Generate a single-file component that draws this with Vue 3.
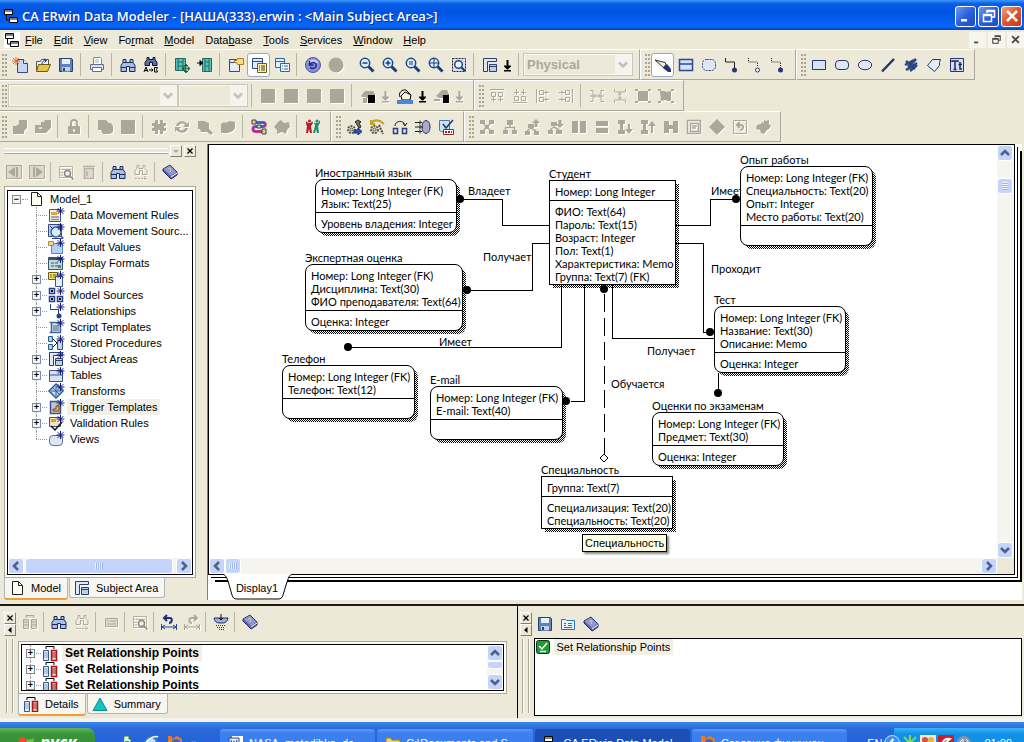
<script setup>
import { h, ref } from "vue";

// little asterisk that marks the tree icons
const star = '<path d="M12.5 0v8M8.5 4h8M9.7 1.2l5.6 5.6M15.3 1.2l-5.6 5.6" stroke="#141c7c" fill="none"/>';
const lens = '<path d="M9.5 9.5l5 5" stroke="#1d3d78" stroke-width="3"/><circle cx="6" cy="6" r="4.7" fill="#dcecfb" stroke="#1d4a86" stroke-width="1.5"/>';
const glasses = '<path d="M3 2.500h3v3h4v-3h3v3l2 3v6H9.500v-5h-3v5H1v-6l2-3z" fill="#a9bde8" stroke="#1b2a5e"/><path d="M1 10.500h5.500M9.500 10.500H15M3 5.500h3M10 5.500h3" stroke="#1b2a5e"/>';
const greyGlasses = '<path d="M4 1.5h2v3h4v-3h2v3l2 2v4H9.500v-4h-3v4H2v-4l2-2z" fill="none" stroke="#aca899"/><path d="M2 14.5h12M11 12l3 2.500-3 2" fill="none" stroke="#aca899" stroke-dasharray="2 1"/>';
const book = '<path d="M1 5l7-4 7 7v3l-6 4-8-8z" fill="#5a63a8" stroke="#23285c"/><path d="M1.5 5L8 1.5 14.5 8 9 12z" fill="#8f97d6"/><path d="M9 13l6-4" stroke="#fff"/><path d="M6 5.500c1-2 4-1 2.500 1L8 8" stroke="#e8e27a" fill="none"/>';
const floppy = '<path d="M1.5 1.5h12l1 1v12h-13z" fill="#5f82b8" stroke="#27426f"/><path d="M4 2h8v5H4z" fill="#e6eefa"/><path d="M4 10h8v4.500H4z" fill="#c3cfe2"/><path d="M5 11h2v3H5z" fill="#27426f"/>';
const cylinders = '<path d="M4 4V1.5h8V4" fill="none" stroke="#000"/><path d="M1.5 5.500h5v10h-5z" fill="#e3eefc" stroke="#31598c"/><path d="M2 8h4M2 10h4M2 12h4" stroke="#7fa0cc"/><path d="M9.500 5.500h5v10h-5z" fill="#f3d3d3" stroke="#a61616" stroke-width="1.5"/><path d="M10 8h4M10 10h4M10 12h4" stroke="#a61616"/>';
const areas = '<path d="M1.5 14.5v-13h13v3h-9v10z" fill="#dde8f8" stroke="#2b3f68"/><path d="M7.5 7.5h7v7h-7zM7.5 9.5h7" fill="#bcd0ee" stroke="#2b3f68"/>';
const toolBase = '<circle cx="5.5" cy="10.5" r="3.5" fill="none" stroke="#55584a" stroke-width="2" stroke-dasharray="2 1"/><circle cx="5.5" cy="10.5" r="1.5" fill="#e4dfb8" stroke="#55584a"/>';

const icons = {
  app: '<path d="M1.5 1.5h8v5h-8zM6.5 9.5h8v5h-8z" fill="#fff" stroke="#000"/><path d="M1 3h9M6 11h9" stroke="#000"/><path d="M3.5 7v5H7" stroke="#000" fill="none"/>',
  new: '<path d="M5.5 2.5h6l4 4v9h-10z" fill="#c8d7f0" stroke="#33487f"/><path d="M11.5 2.5v4h4" fill="#fff" stroke="#33487f"/><path d="M4 0v8M0 4h8M1 1l6 6M7 1L1 7" stroke="#e0762a"/>',
  open: '<path d="M1.5 13.5v-9h4l1-2h7v6" fill="#eef2fa" stroke="#555"/><path d="M1.5 14.5l2-7h12l-3 7z" fill="#e4c64a" stroke="#6b5a12"/><path d="M7 7c0-3 2-3.500 4-3.500M9.500 1.5l2 2-2 2" fill="none" stroke="#1c3c7a"/>',
  save: floppy,
  print: '<path d="M4.5 7V.5h7l1 1V7" fill="#fff" stroke="#7c8aa5"/><path d="M1.5 7.5h13v5h-13z" fill="#d9e2f1" stroke="#5f6f8d"/><path d="M3.5 10.5h9v4h-9z" fill="#fff" stroke="#5f6f8d"/><path d="M6 3h4M6 5h4" stroke="#9fb0cf"/>',
  find: glasses,
  replace: '<path d="M4 .5h2v2h4v-2h2v2l2 3v3H9.500v-3h-3v3H2v-3l2-3z" fill="#5b6fae" stroke="#111"/><path d="M1 15l2-5 2 5M2 13.5h2M11.5 10.5h3l-1 2 1 2.500h-3z" fill="none" stroke="#000"/><path d="M6 13h4M8.500 11.5l1.5 1.5-1.5 1.5" fill="none" stroke="#000"/>',
  filmOut: '<path d="M1.5 1.5h10v12h-10z" fill="#59c2b4" stroke="#23695f"/><path d="M4 1v13M9 1v13M4 5h5M4 9h5" stroke="#23695f"/><path d="M12 8v7M8.500 11.5h7M12 7l-2 2h4zM12 16l-2-2h4zM8 11.5l2-2v4zM16 11.5l-2-2v4z" stroke="#145c38" fill="#145c38" stroke-width=".6"/>',
  filmIn: '<path d="M5.500 1.5h9v13h-9z" fill="#59c2b4" stroke="#23695f"/><path d="M8 1v13M12 1v13M8 5h4M8 9h4" stroke="#23695f"/><path d="M0 6h5M3 3.5L5.500 6 3 8.500z" stroke="#000"/>',
  display: '<path d="M1.5 2.5h10v12h-10z" fill="#e2ecfb" stroke="#2e4a80"/><path d="M1.5 5.500h6" stroke="#2e4a80"/><path d="M6.5 3.5h2l1-2h6v6h-6l-1-2h-2z" fill="#fbd987" stroke="#b07a1c"/>',
  tables: '<path d="M1.5 1.5h10v10h-10z" fill="#e2ecfb" stroke="#2e4a80"/><path d="M1.5 4.5h10" stroke="#2e4a80"/><path d="M6.5 6.5h9v9h-9z" fill="#fbf3b5" stroke="#665c1c"/><path d="M8 9h1M8 11h1M8 13h1M10 9h4M10 11h4M10 13h4" stroke="#3c3a20"/>',
  columns: '<path d="M1.5 1.5h9v9h-9z" fill="#e2ecfb" stroke="#2e6a9a"/><path d="M1.5 4.5h9" stroke="#2e6a9a"/><path d="M6.5 6.5h9v8h-9z" fill="#eef6ff" stroke="#2e6a9a"/><path d="M8 9h1M8 12h1M10 9h4M10 12h4" stroke="#2e6a9a"/>',
  undo: '<circle cx="8" cy="8" r="7.5" fill="#8790e0" stroke="#4f579a"/><path d="M2.5 6a6 6 0 0 1 11 0z" fill="#c9cdf6"/><path d="M5 10.5c5 3 8-2 5-4.500-1.5-1-3-.5-5 1M4.5 4v4h4" fill="none" stroke="#23247c" stroke-width="1.5"/>',
  disc: '<circle cx="8" cy="8" r="7.5" fill="#aca899"/>',
  zoomOut: lens + '<path d="M3.5 6h5" stroke="#1d3d78" stroke-width="1.5"/>',
  zoomIn: lens + '<path d="M3.5 6h5M6 3.5v5" stroke="#1d3d78" stroke-width="1.5"/>',
  zoomEq: lens + '<path d="M4 5h4M4 7h4" stroke="#1d3d78"/>',
  zoomFit: lens + '<path d="M1 6h10M6 1v10" stroke="#1d3d78"/>',
  zoomSel: '<path d="M1.5 1.5h13v13h-13z" fill="#d3dff2" stroke="#222" stroke-dasharray="2 1"/><path d="M10 10l4 4" stroke="#1d3d78" stroke-width="2"/><circle cx="7.5" cy="7.5" r="3.8" fill="#eef6ff" stroke="#1d4a86" stroke-width="1.5"/>',
  areas,
  pointer: '<path d="M0 3l10 2.500 2 4-3 1.5z" fill="#f5ecd2" stroke="#2b2b2b"/><path d="M9 9l3-2 4 5v3h-3l-5-4z" fill="#26356e"/>',
  entity: '<path d="M1.5 2.5h13v11h-13z" fill="#d7e2f6" stroke="#2a4a94" stroke-width="1.5"/><path d="M1 7h14" stroke="#2a4a94" stroke-width="1.5"/>',
  roundEnt: '<rect x="1.5" y="2.5" width="13" height="11" rx="4" fill="#dfe7f6" stroke="#2a3e78" stroke-dasharray="2 1"/>',
  rel: '<path d="M1.5 1v4h9v6" fill="none" stroke="#222"/><circle cx="10.5" cy="13" r="2.5" fill="#24387c"/>',
  relMany: '<path d="M1.5 1v4h9v5" fill="none" stroke="#222" stroke-dasharray="1 1"/><circle cx="10.5" cy="13" r="2" fill="#fff" stroke="#24387c"/>',
  relNon: '<path d="M1.5 1v4h9v6" fill="none" stroke="#222" stroke-dasharray="1 1"/><circle cx="10.5" cy="13" r="2.5" fill="#24387c"/>',
  rect: '<path d="M1.5 3.5h13v9h-13z" fill="#d7e2f6" stroke="#26356e"/>',
  rrect: '<rect x="1.5" y="3.5" width="13" height="9" rx="3.5" fill="#dfe7f6" stroke="#26356e"/>',
  ellipse: '<ellipse cx="8" cy="8" rx="6.7" ry="4.7" fill="#dfe7f6" stroke="#26356e"/>',
  line: '<path d="M2 14.5L14 2" stroke="#26356e" stroke-width="2.5"/>',
  scribble: '<path d="M2 8l9-5M3 13L14 6M7 14l7-6M3 4l9 8M5 10l8-8" stroke="#2d4382" stroke-width="2.5"/>',
  polygon: '<path d="M6.5 2.5h8l-1 3v3l-5 6-7-6z" fill="#e6edf9" stroke="#26356e"/>',
  text: '<path d="M1.5 1.5h13v13h-13z" fill="#d5e0f4" stroke="#26356e"/><path d="M3 5V4h6v1M6 4v8M4.5 12.5h3M11 5v7h2M9.500 7.5H13" stroke="#1c2857" fill="none" stroke-width="1.5"/>',
  square: '<path d="M1 1h14v14H1z" fill="#aca899"/>',
  paintGrey: '<path d="M1 8l4-5h8l2 3v4H6v-1H2zM3 10h4v5H3z" fill="#aca899"/><path d="M8 7h7v8H8z" fill="#000"/>',
  paint: '<path d="M4 8l4-4 6 3-1 5H5z" fill="#fdf6d6" stroke="#000"/><path d="M3 9c-2-4 2-8 6-7l5 5" fill="none" stroke="#000"/><path d="M0 12h16v4H0z" fill="#4d86d8"/>',
  lineGrey: '<path d="M2 8l6-6h5l2 4v4H5zM0 11h6v2H0z" fill="#aca899"/><path d="M9 7h6v8H9z" fill="#000"/>',
  alignT: '<path d="M1 1.5h14M2.5 4.5h4v4h-4zM9.500 4.5h4v4h-4zM4.5 9v5M11.5 9v5M2 11.5h5M9 11.5h5" fill="none" stroke="#aca899"/>',
  alignB: '<path d="M1 14.5h14M2.5 8.500h4v4h-4zM9.500 8.500h4v4h-4zM4.5 1v6M11.5 1v6M2 4.5h5M9 4.5h5" fill="none" stroke="#aca899"/>',
  alignL: '<path d="M1.5 1v14M4.5 2.5h4v4h-4zM4.5 9.500h4v4h-4zM9 4.5h5M9 11.5h5M11 2.5v4M11 9.500v4" fill="none" stroke="#aca899"/>',
  alignR: '<path d="M14.5 1v14M7.5 2.5h4v4h-4zM7.5 9.500h4v4h-4zM1 4.5h6M1 11.5h6M4 2.5v4M4 9.500v4" fill="none" stroke="#aca899"/>',
  spreadH: '<path d="M1 2.5h3v11H1M15 2.5h-3v11h3M4 8h8M6 6v4M10 6v4M1 8h3M12 8h3" fill="none" stroke="#aca899"/>',
  spreadV: '<path d="M2.5 1v3h11V1M2.5 15v-3h11v3M8 4v8M6 6h4M6 10h4" fill="none" stroke="#aca899"/>',
  group: '<path d="M3 3h10v10H3zM0 1h3v2H0zM13 1h3v2h-3zM0 13h3v2H0zM13 13h3v2h-3z" fill="#aca899"/>',
  ungroup: '<path d="M2 3h5l1 1 5-1v10H9l-1-1-5 1zM0 1h3v2H0zM13 1h3v2h-3zM0 13h3v2H0zM13 13h3v2h-3z" fill="#aca899"/>',
  copyA: '<path d="M7 1h8v8l-3 3v3H1V7h3l3-2z" fill="#aca899"/>',
  copyB: '<path d="M6 3h3l1-2h6v8l-5 5H0V6h6z" fill="#aca899"/><path d="M4 8h3v2H4z" fill="#e6e3d4"/>',
  lock: '<path d="M2 7h12v8H2z" fill="#aca899"/><path d="M5 7V4a3 3 0 0 1 6 0v3" fill="none" stroke="#aca899" stroke-width="2"/><path d="M7 10h2v3H7z" fill="#ece9d8"/>',
  pages: '<path d="M1 1h8l3 3h2l2 3v6l-3 2H6l-2-4H1z" fill="#aca899"/>',
  cmp: '<path d="M1 4h3V1h3v4h2V1h3v3h3v3h-2v2h2v3h-3v3H9v-4H7v4H4v-3H1V9h2V7H1z" fill="#aca899"/>',
  cycle: '<path d="M2 7c1-6 9-6 11-2l2-2v5h-6l2-2C9 4 6 4 5 7zM14 9c-1 6-9 6-11 2l-2 2V8h6l-2 2c2 2 5 2 6-1z" fill="#aca899"/>',
  docFind: '<path d="M1 2h6l5 2v6l4 4-2 2-4-3H4l-1-3H1z" fill="#aca899"/>',
  docs: '<path d="M1 5l3-2 1 1 5-2 5 1v6l-2 3-5 2H1z" fill="#aca899"/>',
  snake: '<path d="M2 3.5h10c3 0 3 4 0 4H5c-4 0-4 5 0 5h9" fill="none" stroke="#c23a86" stroke-width="3"/><path d="M2 3.5h10c3 0 3 4 0 4H5c-4 0-4 5 0 5h9" fill="none" stroke="#2f62c4"/><path d="M1 1h4v4H1zM11 10h4v5h-4zM6 6h4v3H6z" fill="#f1d44b" stroke="#2f3f8c"/>',
  blob: '<path d="M4 3l3-2 3 3 5-1 1 5-3 3-1 4-4-2-5 2v-4l-3-3z" fill="#aca899"/>',
  people: '<path d="M1 2l2 2h3l1-2 1 2-2 3 1 7H5l-1-4-1 4H1l1-7-1-2z" fill="#b3202a"/><path d="M9 2l1 2h3l2-3v3l-2 3 1 7h-2l-1-4-1 4H8l2-7z" fill="#1e8b74"/><circle cx="4.5" cy="2" r="1.5" fill="#b3202a"/><circle cx="12" cy="2" r="1.5" fill="#1e8b74"/>',
  gearRun: toolBase + '<path d="M9 3l3-2 3 2-2 1 2 4-2 1-3-5z" fill="#7c7c70" stroke="#222"/><path d="M8 11h4V9l4 3.500L12 16v-2H8z" fill="#2c54c8" stroke="#142a74"/>',
  gearBack: toolBase + '<path d="M2 5c2-4 6-4 9-3l4 3M2 1v4h4" fill="none" stroke="#c9a21c" stroke-width="2"/><path d="M10 6l4 9" stroke="#444" stroke-width="2" stroke-dasharray="2 1"/>',
  swap: '<path d="M3 7c0-6 9-6 10-1M11 4l2 3 2-3" fill="none" stroke="#222"/><path d="M1.5 9.500h4v5h-4zM10.5 9.500h4v5h-4z" fill="#dfe7f6" stroke="#2a3e78" stroke-width="1.5"/>',
  target: '<ellipse cx="11" cy="8" rx="4" ry="6.5" fill="#a7acd0" stroke="#2b2f56"/><path d="M0 3.5h7M0 8h8M0 12.5h7M5 1.5v4M5 6v4M5 10.5v4" stroke="#222" fill="none"/>',
  sql: '<path d="M1.5 1.5h10v10c-3 2-7 2-10 0z" fill="#cfe0f6" stroke="#4677b0"/><path d="M5 5l3 4 7-8" fill="none" stroke="#1a3a6c" stroke-width="1.5"/><path d="M5.500 10.5h10v5h-10z" fill="#fff" stroke="#8f2a20"/><path d="M7 13h2M10 13h2M13 13h1" stroke="#8f2a20" stroke-width="2"/>',
  treeA: '<path d="M1 1h5v4H1zM10 1h5v4h-5zM1 11h5v4H1zM10 11h5v4h-5zM6 6h4v4H6z" fill="#aca899"/><path d="M4 4l8 8M12 4l-8 8" stroke="#aca899" stroke-width="1.5"/>',
  treeB: '<path d="M5 1h6v5H5zM1 11h5v4H1zM10 11h5v4h-5z" fill="#aca899"/><path d="M3.5 11V8.500h9V11M8 6v3" fill="none" stroke="#aca899" stroke-width="1.5"/>',
  treeC: '<path d="M3 5h6v4H3zM0 12h5v4H0zM9 12h5v4H9zM11 0l4 4h-2.500v4h-3V4H7z" fill="#aca899"/><path d="M2 12l4-3 5 3" fill="none" stroke="#aca899" stroke-width="1.5"/>',
  treeD: '<path d="M3 3h6v4H3zM0 11h5v4H0zM8 11h6v4H8zM12 9L8 5h2.500V1h3v4H16z" fill="#aca899"/><path d="M2 11l4-3 5 3" fill="none" stroke="#aca899" stroke-width="1.5"/>',
  barsV: '<path d="M1 2h6v12H1zM9 2h6v12H9z" fill="#aca899"/>',
  barsH: '<path d="M2 2h12v5H2zM2 9h12v5H2z" fill="#aca899"/>',
  iDown: '<path d="M1 1h7v4H1zM1 11h7v4H1zM3 5h3v6H3zM11 5h2v5h3l-4 5-4-5h3z" fill="#aca899"/>',
  iUp: '<path d="M1 1h7v4H1zM1 11h7v4H1zM3 5h3v6H3zM11 14h2V7h3l-4-5-4 5h3z" fill="#aca899"/>',
  hBar: '<path d="M1 2h5v12H1zM10 2h5v12h-5zM6 6h4v4H6z" fill="#aca899"/>',
  scroll: '<path d="M1.5 1.5h13v13h-13zM4.5 4.5h8v8h-8zM6 7h5M6 9h4" fill="none" stroke="#aca899" stroke-width="1.5"/>',
  diamond: '<path d="M8 0l8 8-8 8-8-8z" fill="#aca899"/>',
  back: '<path d="M1.5 1.5h13v13h-13z" fill="none" stroke="#aca899"/><path d="M5 6h4c3 0 3 5-1 5M8 3L5 6l3 3" fill="none" stroke="#aca899" stroke-width="2"/>',
  clover: '<path d="M9 1l2 1 3-1v4l2 2-2 3-2 1-3 4-3-1-1-3-4-1 1-4 4-1 1-2 2 1z" fill="#aca899"/>',
  prev: '<path d="M.5 1.5h15v13H.5z" fill="#dddacb" stroke="#aca899"/><path d="M9 3v10L2 8zM10 3h2v10h-2z" fill="#aca899"/>',
  next: '<path d="M.5 1.5h15v13H.5z" fill="#dddacb" stroke="#aca899"/><path d="M7 3v10l7-5zM4 3h2v10H4z" fill="#aca899"/>',
  props: '<path d="M1.5 2.5h13v11h-13zM4 5.500h9M2 5.500h1M2 8.500h3M2 11h3" fill="none" stroke="#b5b1a2"/><circle cx="9.500" cy="9.500" r="3" fill="#eee" stroke="#8e8b7e" stroke-width="1.5"/><path d="M11.5 11.5l4 4" stroke="#8e8b7e" stroke-width="1.5"/>',
  trash: '<path d="M3.5 4.5h9v10h-9zM2 2.5h12M6 7v5" fill="#dedbce" stroke="#b5b1a2" stroke-width="1.5"/>',
  findNext: greyGlasses,
  book,
  page: '<path d="M3.5 1.5h6l4 4v9h-10z" fill="#fffff4" stroke="#222"/><path d="M9.500 1.5v4h4" fill="none" stroke="#222"/>',
  dmRules: '<path d="M1.5 2.5h11v12h-11z" fill="#f6f2e0" stroke="#3b5688"/><path d="M3 5h6v3H3z" fill="#e0a93c"/><path d="M3 10h8M3 12.5h8" stroke="#7c8fb8" stroke-width="1.5"/>' + star,
  dmSource: '<path d="M.5 1.5h13v12H.5z" fill="#b9d0ee" stroke="#33487f"/><circle cx="8" cy="9" r="5" fill="#d8ecf8" stroke="#35688f" stroke-width="1.5"/><path d="M2 3l3 3M13 14h2v1.5H4" stroke="#3a3a8c" fill="none"/>' + star,
  defaults: '<path d="M3.5 4.5h11v10h-11z" fill="#b4d2f6" stroke="#5f86bb"/><path d="M.5 2.5h5v4h-5z" fill="#f3d489" stroke="#b08a36"/>' + star,
  formats: '<path d="M.5 2.5h14v12H.5z" fill="#c6d8de" stroke="#35566a"/><path d="M.5 4h14" stroke="#35566a" stroke-width="2"/><path d="M3 8h3M7 8h3M3 11h3M7 11h3" stroke="#35566a"/><path d="M10 10h3v3h-3z" fill="#3f8f6c"/>' + star,
  domains: '<path d="M.5 1.5h9v7h-9z" fill="#f5e46c" stroke="#6c5d14"/><path d="M2 4h2M5 4h3M2 6h2M5 6h3" stroke="#6c5d14"/><path d="M7.5 5.500h7v10h-7z" fill="#e6eefb" stroke="#3b5688"/>' + star,
  sources: '<path d="M1.5 1.5h5v5h-5zM1.5 9.500h5v5h-5zM9.500 9.500h5v5h-5z" fill="#dfe9fa" stroke="#26408c" stroke-width="1.5"/><path d="M3 4h2M3 12h2M11 12h2" stroke="#000" stroke-width="2"/>' + star,
  rels: '<path d="M2.5 1v5.500h8V12" fill="none" stroke="#26408c"/><circle cx="11" cy="13" r="2.5" fill="#26408c"/>' + star,
  script: '<path d="M3.5 3.5h9v10h-9zM1.5 3.5h3M1.5 13.5h9" fill="#cfdff4" stroke="#47658f" stroke-width="1.5"/><path d="M5 7h6M5 9h6M5 11h6" stroke="#47658f"/>' + star,
  procs: '<path d="M.5 1.5h4v5h-4zM.5 9.500h4v5h-4z" fill="#a9d3f0" stroke="#2a5c8c"/><path d="M5 4l4 4-4 4" fill="none" stroke="#222"/><path d="M9.500 5.500h5v9h-5z" fill="#c6d5ee" stroke="#33487f"/>' + star,
  subj: areas + star,
  tbl: '<path d="M1.5 3.5h13v11h-13z" fill="#d7e2f6" stroke="#3b5688"/><path d="M1 8h14" stroke="#3b5688"/>' + star,
  trans: '<path d="M8 1l7 7-7 7-7-7z" fill="#c9def2" stroke="#2c5a8e" stroke-width="1.5"/><path d="M8 3v10M3 8h10M5 5l6 6" stroke="#2c5a8e"/>' + star,
  trig: '<path d="M2.5 2.5h10v12h-10z" fill="#b9c7de" stroke="#47527a" stroke-width="1.5"/><path d="M5 10h3V7h3v5H5z" fill="#e9b45a" stroke="#7b4d10"/>' + star,
  valid: '<path d="M1.5 2.5h11v9h-11z" fill="#f0e4c0" stroke="#47527a"/><path d="M3 4h5v3H3z" fill="#e09a3c"/><path d="M3 11l4 4 7-8" fill="none" stroke="#111" stroke-width="1.5"/>' + star,
  views: '<rect x="1.5" y="4.5" width="13" height="10" rx="3.5" fill="#dfe7f6" stroke="#5a6ea6"/>' + star,
  cyl: cylinders,
  cylGrey: '<path d="M4 4V1.5h8V4M1.5 5.500h5v9h-5zM9.500 5.500h5v9h-5zM2 8h4M2 11h4M10 8h4M10 11h4" fill="#dedbce" stroke="#aca899"/>',
  card: '<path d="M2.5 4.5h12v8h-12z" fill="#dedbce" stroke="#aca899"/><path d="M4 7h2M7 7h6M4 10h9" stroke="#aca899"/>',
  cardBlue: '<path d="M1.5 3.5h4l1 1h8v9h-13z" fill="#e9f3ff" stroke="#2d6fb4"/><path d="M4 7.5h2M8 7.5h4M4 9.5h2M8 9.5h4M4 11.5h8" stroke="#2d6fb4"/>',
  undoAct: '<path d="M6 1L3 4l3 3M4 4h5c3 0 2 5-1 5" fill="none" stroke="#1b2e80" stroke-width="2"/><path d="M.5 10v6M15.5 10v6M1 13h14M4 11l-3 2 3 2M12 11l3 2-3 2" fill="none" stroke="#1b4a9c"/>',
  redoAct: '<path d="M10 1l3 3-3 3M12 4H8C4 4 5 9 8 9" fill="none" stroke="#aca899" stroke-width="2"/><path d="M.5 10v6M15.5 10v6M1 13h14M4 11l-3 2 3 2M12 11l3 2-3 2" fill="none" stroke="#aca899"/>',
  sieve: '<path d="M1 4h14c-1 5-4 5-7 5S2 9 1 4z" fill="#9fb0dc" stroke="#1b2a5e"/><path d="M8 0v6M6 4l2 2 2-2" stroke="#111" fill="none"/><path d="M3 11.5h10M4 13.5h8M6 15.5h5" stroke="#333" stroke-dasharray="1 1"/>',
  pyramid: '<path d="M8 2l7 12.500H1z" fill="#16c4bf" stroke="#0c8f90"/>',
  ok: '<rect x="1.5" y="1.5" width="13" height="13" rx="2" fill="#1f9a34" stroke="#0c3a14"/><path d="M4 7l3 3 5-6M5 12.5h6" fill="none" stroke="#fff" stroke-width="1.5"/>',
  word: '<path d="M4 1h11v13H4z" fill="#fff"/><path d="M1 3h10v10H1z" fill="#dfe8fa" stroke="#2a4a94"/><path d="M3 5l1.5 6L6 6l1.5 5L9 5" fill="none" stroke="#2a4a94"/>',
  folder: '<path d="M1 3h5l1 2h8v9H1z" fill="#f4d36a" stroke="#a07a1c"/>',
  fox: '<path d="M1 1h4v3l5-3 5 3v11H1z" fill="#e9792a"/><circle cx="9" cy="8" r="4" fill="#3a66c4"/><path d="M2 6c3 0 2 6 9 8H3z" fill="#f5b13c"/>',
  phone: '<path d="M5 1h5v3h2v11H4z" fill="#e8f4e8" stroke="#2f7c3a"/><path d="M6 6h4v3H6z" fill="#2f9c4a"/>',
  ie: '<circle cx="8" cy="8" r="6" fill="#bfe0fb" stroke="#2b7fd0" stroke-width="2"/><path d="M2 8h11M1 13C2 6 10 0 15 2" fill="none" stroke="#fff" stroke-width="1.5"/>',
  arrowBall: '<circle cx="8" cy="8" r="7.5" fill="#3d8ff0" stroke="#bfe0fb"/><path d="M9.500 4L6 8l3.500 4" fill="none" stroke="#fff" stroke-width="2"/>',
  leaf: '<path d="M8 0v16M0 8h16M2 2l12 12M14 2L2 14" stroke="#7fd84a" stroke-width="2"/>',
  flower: '<path d="M0 0h16v16H0z" fill="#f3ead6"/><circle cx="5" cy="5" r="3" fill="#e0503a"/><circle cx="11" cy="5" r="3" fill="#f0b23c"/><circle cx="8" cy="10" r="3" fill="#4a9a4c"/>',
  red: '<rect width="16" height="16" rx="2" fill="#cf1c28"/><path d="M4 12C4 5 8 3 12 4L6 9h6" fill="none" stroke="#fff" stroke-width="2"/>',
  speaker: '<circle cx="8" cy="8" r="7" fill="#8b93a4"/><path d="M4 12V7l3-3v9M10 4c3 2 3 6 0 9" fill="none" stroke="#fff"/>',
  flag: '<path d="M1 4c3-3 5-2 7-1L7 8C5 7 3 7 0 9z" fill="#e8502a"/><path d="M9 4c2 1 4 1 7-1l-1 5c-3 2-5 1-7 0z" fill="#7cc03a"/><path d="M0 10c3-2 5-1 7 0l-1 5c-2-1-4-1-6 0z" fill="#4a8af0"/><path d="M8 10c2 1 4 1 7 0l-1 5c-3 2-5 1-7 0z" fill="#f5c62c"/>',
  drop: '<path d="M4 8.500h7v1L8 12.500h-1L4 9.500zM6.500 3h2v5.500h-2zM4 13h7v1.5H4z" fill="currentColor"/>',
  up: '<path d="M4 10l4-4 4 4" fill="none" stroke="#4d6185" stroke-width="2.5"/>',
  down: '<path d="M4 6l4 4 4-4" fill="none" stroke="#4d6185" stroke-width="2.5"/>',
  left: '<path d="M10 4L6 8l4 4" fill="none" stroke="#4d6185" stroke-width="2.5"/>',
  right: '<path d="M6 4l4 4-4 4" fill="none" stroke="#4d6185" stroke-width="2.5"/>',
  chevGrey: '<path d="M4 6l4 4 4-4" fill="none" stroke="#c4c2b8" stroke-width="2.5"/>',
  min: '<path d="M3 11h6v2.500H3z" fill="currentColor"/>',
  restore: '<path d="M6 5V2.500h7.500V9H11M2.500 6.500h8v7h-8zM2.500 7.5h8M6 3.5h7.500" fill="none" stroke="currentColor" stroke-width="1.5"/>',
  cross: '<path d="M3 3l10 10M13 3L3 13" stroke="currentColor" stroke-width="2.5"/>',
  tri: '<path d="M11 2v12L4 8z" fill="currentColor"/>',
  triDown: '<path d="M2 6h12l-6 6z" fill="currentColor"/>'
};

const Icon = (props) => h("svg", { class: "icon", viewBox: "0 0 16 16", "aria-hidden": "true", innerHTML: icons[props.name] });
Icon.props = ["name"];

const menus = [["", "F", "ile"], ["", "E", "dit"], ["", "V", "iew"], ["Fo", "r", "mat"], ["", "M", "odel"], ["Data", "b", "ase"], ["", "T", "ools"], ["", "S", "ervices"], ["", "W", "indow"], ["", "H", "elp"]];

// "|" separator, "v" black arrow, "x" grey arrow, "+" active button, "-" disabled button
const toolbars = [
  [
    ["new", "open", "save", "|", "print", "|", "find", "replace", "|", "filmOut", "filmIn", "|", "display", "+tables", "columns", "|", "undo", "-disc", " ", "zoomOut", "zoomIn", "zoomEq", "zoomFit", "zoomSel", "|", "areas", "v", "|", "=notation"],
    ["+pointer", "entity", "roundEnt", "rel", "relMany", "relNon"],
    ["rect", "rrect", "ellipse", "line", "scribble", "polygon", "text"]
  ],
  [
    ["=font", "=size", "|", "-square", "-square", "-square", "-square", "|", "-paintGrey", "x", "paint", "v", "-lineGrey", "x"],
    ["-alignT", "-alignB", "-alignL", "-alignR", "|", "-spreadH", "-spreadV", "-group", "-ungroup"]
  ],
  [
    ["-copyA", "-copyB", "|", "-lock", "|", "-pages", "-square", "|", "-cmp", "-cycle", "-docFind", "-docs", "|", "snake", "-blob", "|", "people"],
    ["gearRun", "gearBack", "swap", "target", "sql"],
    ["-treeA", "-treeB", "-treeC", "-treeD", "-barsV", "-barsH", "-iDown", "-iUp", "-hBar", "-scroll", "-diamond", "-back", "-clover"]
  ]
];

const sideTools = ["-prev", "-next", "|", "-props", "-trash", "|", "find", "-findNext", "|", "book"];
const logTools = ["-cylGrey", "|", "find", "-findNext", "|", "-card", "|", "-props", "|", "undoAct", "-redoAct", "|", "sieve", "|", "book"];
const adviceTools = ["save", "cardBlue", "book"];

const iconName = (item) => item.replace(/^[+-]/, "");

const tree = [
  { icon: "dmRules", text: "Data Movement Rules" },
  { icon: "dmSource", text: "Data Movement Sourc..." },
  { icon: "defaults", text: "Default Values" },
  { icon: "formats", text: "Display Formats" },
  { icon: "domains", text: "Domains", more: true },
  { icon: "sources", text: "Model Sources", more: true },
  { icon: "rels", text: "Relationships", more: true },
  { icon: "script", text: "Script Templates" },
  { icon: "procs", text: "Stored Procedures" },
  { icon: "subj", text: "Subject Areas", more: true },
  { icon: "tbl", text: "Tables", more: true },
  { icon: "trans", text: "Transforms" },
  { icon: "trig", text: "Trigger Templates", more: true },
  { icon: "valid", text: "Validation Rules", more: true },
  { icon: "views", text: "Views" }
];
const selected = ref("Trigger Templates");

const fk = "Номер: Long Integer (FK)";
const entities = [
  { name: "Иностранный язык", x: 106, y: 21, w: 142, keys: [fk, "Язык: Text(25)"], attrs: ["Уровень владения: Integer"] },
  { name: "Экспертная оценка", x: 96, y: 106, w: 158, keys: [fk, "Дисциплина: Text(30)", "ФИО преподавателя: Text(64)"], attrs: ["Оценка: Integer"] },
  { name: "Студент", x: 340, y: 22, w: 127, strong: true, keys: ["Номер: Long Integer"], attrs: ["ФИО: Text(64)", "Пароль: Text(15)", "Возраст: Integer", "Пол: Text(1)", "Характеристика: Memo", "Группа: Text(7) (FK)"] },
  { name: "Опыт работы", x: 531, y: 8, w: 133, keys: [fk, "Специальность: Text(20)", "Опыт: Integer", "Место работы: Text(20)"], attrs: [] },
  { name: "Тест", x: 505, y: 148, w: 132, keys: [fk, "Название: Text(30)", "Описание: Memo"], attrs: ["Оценка: Integer"] },
  { name: "Телефон", x: 73, y: 207, w: 133, keys: [fk, "Телефон: Text(12)"], attrs: [] },
  { name: "E-mail", x: 221, y: 228, w: 133, keys: [fk, "E-mail: Text(40)"], attrs: [] },
  { name: "Оценки по экзаменам", x: 443, y: 254, w: 132, keys: [fk, "Предмет: Text(30)"], attrs: ["Оценка: Integer"] },
  { name: "Специальность", x: 332, y: 318, w: 132, strong: true, keys: ["Группа: Text(7)"], attrs: ["Специализация: Text(20)", "Специальность: Text(20)"] }
];
const links = ["M255 54H293V80H340", "M262 145H323V98H340", "M139 202H352V140", "M362 256H375V140", "M403 140V193H505", "M467 80H501V54H526", "M467 98H494V187H501", "M509 228V248"];
const dots = [[251, 54], [258, 145], [139, 202], [357, 256], [527, 54], [501, 187], [509, 248], [395, 144]];
const verbs = [
  { text: "Владеет", x: 259, y: 39 },
  { text: "Получает", x: 274, y: 105 },
  { text: "Имеет", x: 230, y: 190 },
  { text: "Имеет", x: 502, y: 39 },
  { text: "Проходит", x: 502, y: 117 },
  { text: "Получает", x: 438, y: 199 },
  { text: "Обучается", x: 402, y: 232 }
];

const tasks = [
  { icon: "word", text: "NASA_metodibka_do..." },
  { icon: "folder", text: "C:\\Documents and S..." },
  { icon: "app", text: "CA ERwin Data Model...", on: true },
  { icon: "fox", text: "Создание функцион..." }
];
</script>

<template>
  <div class="window">
    <header class="title">
      <Icon name="app" />
      <h1>CA ERwin Data Modeler - [НАША(333).erwin : &lt;Main Subject Area&gt;]</h1>
      <button class="cap" aria-label="Minimize"><Icon name="min" /></button>
      <button class="cap" aria-label="Restore"><Icon name="restore" /></button>
      <button class="cap close" aria-label="Close"><Icon name="cross" /></button>
    </header>

    <nav class="menu">
      <span class="menu-logo"><Icon name="app" /></span>
      <button v-for="m in menus" :key="m.join('')">{{ m[0] }}<u>{{ m[1] }}</u>{{ m[2] }}</button>
      <span class="mdi">
        <button aria-label="Minimize document"><Icon name="min" /></button>
        <button aria-label="Restore document"><Icon name="restore" /></button>
        <button aria-label="Close document"><Icon name="cross" /></button>
      </span>
    </nav>

    <div v-for="(row, r) in toolbars" :key="r" class="tool-row">
      <div v-for="(bar, b) in row" :key="b" class="bar">
        <i class="grip"></i>
        <template v-for="(item, i) in bar" :key="i">
          <i v-if="item === '|'" class="sep"></i>
          <i v-else-if="item === ' '" class="sep blank"></i>
          <button v-else-if="item === 'v' || item === 'x'" class="arrow" :class="{ off: item === 'x' }" aria-label="More"><Icon name="drop" /></button>
          <span v-else-if="item[0] === '='" class="combo" :class="item.slice(1)">
            <select :aria-label="item.slice(1)" disabled>
              <option>{{ item === "=notation" ? "Physical" : "" }}</option>
            </select>
            <Icon name="chevGrey" />
          </span>
          <button v-else class="tool" :class="{ on: item[0] === '+', off: item[0] === '-' }" :aria-label="iconName(item)"><Icon :name="iconName(item)" /></button>
        </template>
      </div>
    </div>

    <main class="work">
      <aside class="side">
        <div class="side-head">
          <i class="lines"></i>
          <button class="mini dim" aria-label="Menu"><Icon name="triDown" /></button>
          <button class="mini" aria-label="Close panel"><Icon name="cross" /></button>
        </div>
        <div class="side-tools">
          <template v-for="(item, i) in sideTools" :key="i">
            <i v-if="item === '|'" class="sep"></i>
            <button v-else class="tool" :class="{ off: item[0] === '-' }" :aria-label="iconName(item)"><Icon :name="iconName(item)" /></button>
          </template>
        </div>
        <div class="frame">
          <div class="well">
            <ul class="tree">
              <li class="root"><i class="exp">−</i><Icon name="page" /><span>Model_1</span></li>
              <li v-for="n in tree" :key="n.text" @click="selected = n.text">
                <i v-if="n.more" class="exp">+</i><i v-else class="exp none"></i>
                <Icon :name="n.icon" /><span :class="{ sel: n.text === selected }">{{ n.text }}</span>
              </li>
            </ul>
            <div class="hscroll">
              <button aria-label="Scroll left"><Icon name="left" /></button>
              <i class="thumb wide"></i>
              <button aria-label="Scroll right"><Icon name="right" /></button>
            </div>
          </div>
        </div>
        <div class="tabs">
          <button class="tab on"><Icon name="page" />Model</button>
          <button class="tab"><Icon name="areas" />Subject Area</button>
        </div>
      </aside>

      <section class="doc">
        <div class="sheet">
          <div class="canvas">
            <span v-for="(v, i) in verbs" :key="i" class="verb" :style="{ left: v.x + 'px', top: v.y + 'px' }">{{ v.text }}</span>
            <article v-for="e in entities" :key="e.name" class="entity" :class="{ strong: e.strong }" :style="{ left: e.x + 'px', top: e.y + 'px', width: e.w + 'px' }">
              <h2>{{ e.name }}</h2>
              <div class="shade">
                <div class="box">
                  <div class="keys"><p v-for="k in e.keys" :key="k">{{ k }}</p></div>
                  <div class="attrs"><p v-for="a in e.attrs" :key="a">{{ a }}</p></div>
                </div>
              </div>
            </article>
            <svg class="links" width="700" height="400" aria-hidden="true">
              <path v-for="d in links" :key="d" :d="d" />
              <path d="M395 149V309" stroke-dasharray="18 6" />
              <path class="diamond" d="M395 309l4 4-4 4-4-4z" />
              <circle v-for="d in dots" :key="d.join()" :cx="d[0]" :cy="d[1]" r="4" />
            </svg>
            <span class="tip">Специальность</span>
          </div>
          <div class="vscroll">
            <button aria-label="Scroll up"><Icon name="up" /></button>
            <i class="thumb"></i>
            <button aria-label="Scroll down"><Icon name="down" /></button>
          </div>
          <div class="hscroll">
            <button aria-label="Scroll left"><Icon name="left" /></button>
            <i class="thumb"></i>
            <button aria-label="Scroll right"><Icon name="right" /></button>
          </div>
          <i class="corner"></i>
        </div>
        <div class="doc-tabs">
          <button class="doc-tab">
            <svg width="74" height="27" aria-hidden="true">
              <path d="M0 0c5 0 6 2 8 7l4 14c1 3 2 4 5 4h41c3 0 4-1 5-4l4-13c2-6 3-8 7-8" />
            </svg>
            <span>Display1</span>
          </button>
        </div>
      </section>
    </main>

    <footer class="dock">
      <section class="pane log">
        <div class="pane-grip">
          <button class="mini" aria-label="Close log"><Icon name="cross" /></button>
          <button class="mini" aria-label="Collapse log"><Icon name="tri" /></button>
          <i></i>
        </div>
        <div class="pane-body">
          <div class="pane-tools">
            <template v-for="(item, i) in logTools" :key="i">
              <i v-if="item === '|'" class="sep"></i>
              <button v-else class="tool" :class="{ off: item[0] === '-' }" :aria-label="iconName(item)"><Icon :name="iconName(item)" /></button>
            </template>
          </div>
          <div class="frame">
            <div class="well row">
              <ul class="tree bold">
                <li v-for="n in 3" :key="n"><i class="exp">+</i><Icon name="cyl" /><span :class="{ sel: n === 1 }">Set Relationship Points</span></li>
              </ul>
              <div class="vscroll">
                <button aria-label="Scroll up"><Icon name="up" /></button>
                <i class="thumb slim"></i>
                <button aria-label="Scroll down"><Icon name="down" /></button>
              </div>
            </div>
          </div>
          <div class="tabs">
            <button class="tab on"><Icon name="cyl" />Details</button>
            <button class="tab"><Icon name="pyramid" />Summary</button>
          </div>
        </div>
      </section>
      <section class="pane advice">
        <div class="pane-grip">
          <button class="mini" aria-label="Close advisories"><Icon name="cross" /></button>
          <button class="mini" aria-label="Collapse advisories"><Icon name="tri" /></button>
          <i></i>
        </div>
        <div class="pane-body">
          <div class="pane-tools">
            <button v-for="item in adviceTools" :key="item" class="tool" :aria-label="item"><Icon :name="item" /></button>
          </div>
          <ul class="messages">
            <li><Icon name="ok" /><span class="sel">Set Relationship Points</span></li>
          </ul>
        </div>
      </section>
    </footer>

    <div class="taskbar">
      <div class="task-inner">
        <button class="start"><Icon name="flag" />пуск</button>
        <div class="quick"><Icon name="phone" /><Icon name="ie" /><Icon name="fox" /><b>»</b></div>
        <button v-for="t in tasks" :key="t.text" class="task" :class="{ on: t.on }"><Icon :name="t.icon" /><span>{{ t.text }}</span></button>
        <span class="lang">EN</span>
        <div class="tray"><Icon name="arrowBall" /><Icon name="leaf" /><Icon name="flower" /><Icon name="red" /><Icon name="speaker" /><time>01:09</time></div>
      </div>
    </div>
  </div>
</template>

<style>
body {
  background: #ece9d8;
}
</style>

<style scoped>
.window {
  display: flex;
  flex-direction: column;
  height: 100vh;
  overflow: hidden;
  background: #ece9d8;
  color: #000;
  font: 11px/16px "Liberation Sans", Arial, sans-serif;
}

.window * {
  box-sizing: border-box;
}

button {
  display: flex;
  align-items: center;
  justify-content: center;
  flex: none;
  margin: 0;
  padding: 0;
  border: 0;
  background: none;
  color: inherit;
  font: inherit;
}

ul,
p,
h1,
h2 {
  margin: 0;
  padding: 0;
  font: inherit;
  list-style: none;
}

.icon {
  flex: none;
  width: 16px;
  height: 16px;
}

/* title and menu */
.title {
  display: flex;
  align-items: center;
  gap: 2px;
  flex: none;
  height: 30px;
  padding: 2px 2px 0 3px;
  background: linear-gradient(#3f97ff, #0a5fe8 12%, #0053e1 40%, #0560f4 75%, #0667fa 88%, #0042c0);
  color: #fff;
}

.title h1 {
  flex: 1;
  padding-left: 1px;
  font: 600 13px/20px "Open Sans", "Noto Sans", sans-serif;
  text-shadow: 1px 1px 0 #0a2f8c;
  white-space: nowrap;
}

.cap {
  width: 21px;
  height: 21px;
  border: 1px solid #fff;
  border-radius: 3px;
  background: linear-gradient(135deg, #6c9bf4, #2a5fe0 50%, #1c4cc8);
}

.cap.close {
  background: linear-gradient(135deg, #f0a08a, #e0532c 50%, #c43c18);
}

.menu {
  display: flex;
  align-items: center;
  flex: none;
  height: 19px;
}

.menu-logo {
  display: flex;
  margin: 0 0 0 4px;
  background: #fff;
}

.menu > button {
  display: block;
  padding: 0 6px 0 5px;
}

.mdi {
  display: flex;
  gap: 2px;
  margin-left: auto;
  color: #444;
}

.mdi button {
  width: 17px;
  height: 16px;
  background: #f6f5ee;
}

.mdi .icon {
  width: 11px;
  height: 11px;
}

/* toolbars */
.tool-row {
  display: flex;
  flex: none;
  height: 31px;
}

.bar {
  display: flex;
  align-items: center;
  height: 31px;
  padding: 0 6px 0 2px;
  border-top: 1px solid #fff;
  border-right: 1px solid #aca899;
  border-bottom: 1px solid #aca899;
}

.bar + .bar {
  padding-left: 4px;
  border-left: 1px solid #fff;
}

.grip {
  width: 6px;
  height: 22px;
  background: radial-gradient(circle at 1px 1px, #a9a695 1px, transparent 1px) 0 0 / 3px 4px;
}

.tool {
  width: 23px;
  height: 24px;
}

.tool.on {
  border: 1px solid #98a8c4;
  border-radius: 3px;
  background: #fff;
}

.off .icon {
  filter: drop-shadow(1px 1px 0 #fff);
}

.sep {
  flex: none;
  width: 1px;
  height: 23px;
  margin: 0 4px 0 3px;
  background: #b9b6a5;
}

.sep.blank {
  background: none;
}

.side-tools .sep,
.pane-tools .sep {
  height: 20px;
  margin: 0 3px 0 2px;
}

.arrow {
  width: 14px;
}

.arrow.off {
  color: #aca899;
}

.combo {
  position: relative;
  display: flex;
}

.combo select {
  width: 100%;
  height: 23px;
  padding: 0 3px;
  border: 1px solid #c9c7ba;
  outline: 1px solid #f8f7f0;
  outline-offset: -2px;
  border-radius: 0;
  appearance: none;
  background: #ece9d8;
  color: #aca899;
  font: bold 13px/20px "Liberation Sans", Arial, sans-serif;
  opacity: 1;
}

.combo .icon {
  position: absolute;
  top: 2px;
  right: 2px;
  height: 19px;
  background: #f4f3ec;
}

.combo.notation {
  width: 110px;
}

.combo.font {
  width: 170px;
}

.combo.size {
  width: 70px;
}

/* main area */
.work {
  display: flex;
  flex: 1;
  min-height: 0;
  padding: 2px 2px 4px 0;
  gap: 7px;
}

.side {
  display: flex;
  flex-direction: column;
  flex: none;
  width: 200px;
  padding: 0 4px;
}

.side-head {
  display: flex;
  align-items: center;
  gap: 2px;
  height: 13px;
}

.lines {
  flex: 1;
  height: 5px;
  border: 1px solid #fff;
  border-right: 0;
  border-left: 0;
  box-shadow: 0 1px 0 #aca899;
}

.mini {
  width: 12px;
  height: 12px;
  border: 1px solid;
  border-color: #fff #808074 #808074 #fff;
}

.mini .icon {
  width: 8px;
  height: 8px;
}

.mini.dim {
  color: #aca899;
}

.side-tools,
.pane-tools {
  display: flex;
  align-items: center;
  flex: none;
}

.side-tools {
  height: 29px;
  margin-left: -2px;
}

.frame {
  display: flex;
  flex: 1;
  min-height: 0;
  padding: 2px;
  border: 1px solid #aca899;
  background: #fff;
}

.well {
  display: flex;
  flex-direction: column;
  flex: 1;
  min-width: 0;
  border: 1px solid #000;
  background: #fff;
}

.side .frame {
  padding-top: 3px;
}

.well.row {
  flex-direction: row;
}

.tree {
  flex: 1;
  min-height: 0;
  overflow: hidden;
}

.tree li {
  position: relative;
  display: flex;
  align-items: center;
  gap: 6px;
  height: 16px;
  padding-left: 24px;
  white-space: nowrap;
}

.tree li.root {
  padding-left: 4px;
}

/* dotted branch lines */
.tree li::before,
.tree li::after {
  content: "";
  position: absolute;
  left: 28px;
  top: 8px;
  width: 11px;
  border-top: 1px dotted #999;
}

.tree li::before {
  top: 0;
  width: 0;
  height: 16px;
  border-top: 0;
  border-left: 1px dotted #999;
}

.tree li:last-child::before {
  height: 8px;
}

.tree li.root::before {
  display: none;
}

.tree li.root::after {
  left: 14px;
  width: 6px;
}

.tree .icon {
  position: relative;
  z-index: 1;
  overflow: visible;
}

.exp {
  position: relative;
  z-index: 1;
  flex: none;
  width: 9px;
  height: 9px;
  margin-right: 1px;
  border: 1px solid #7f8c9c;
  background: #f6f6f2;
  font: bold 9px/7px "Liberation Sans", Arial, sans-serif;
  text-align: center;
}

.exp.none {
  visibility: hidden;
}

.tree span,
.messages span {
  padding: 0 3px;
}

.tree span {
  margin-left: -3px;
}

.sel {
  background: #f1efe6;
}

.tree.bold {
  font-weight: bold;
  font-size: 12px;
}

.tree.bold li {
  gap: 6px;
  padding-left: 4px;
}

.tree.bold li::before,
.tree.bold li::after {
  left: 8px;
}

.tree.bold span {
  margin-left: -2px;
}

.tabs {
  display: flex;
  flex: none;
  gap: 1px;
}

.tab {
  gap: 6px;
  height: 20px;
  padding: 0 6px 0 4px;
  border: 1px solid #aab6c4;
  border-top: 0;
  border-radius: 0 0 3px 3px;
  background: #f7f6f1;
}

.tab.on {
  height: 22px;
  border-bottom: 2px solid #f0a030;
}

/* scroll bars */
.vscroll,
.hscroll {
  display: flex;
  flex: none;
  background: #f5f4ee;
}

.vscroll {
  flex-direction: column;
  width: 16px;
}

.hscroll {
  height: 16px;
}

.vscroll button,
.hscroll button,
.thumb {
  width: 16px;
  height: 16px;
  border: 1px solid #fff;
  border-radius: 3px;
  background: #c5d4fb;
}

.vscroll button:last-child {
  margin-top: auto;
}

.hscroll button:last-child {
  margin-left: auto;
}

.thumb {
  display: block;
  background: repeating-linear-gradient(90deg, #eef4ff 0 1px, #9db5ee 1px 2px) center / 8px 6px no-repeat, #c5d4fb;
}

.vscroll .thumb {
  background: repeating-linear-gradient(#eef4ff 0 1px, #9db5ee 1px 2px) center / 6px 8px no-repeat, #c5d4fb;
}

.thumb.wide {
  flex: 1;
  margin: 0 3px 0 1px;
}

.vscroll .thumb.slim {
  height: 8px;
  background: #c5d4fb;
}

/* diagram */
.doc {
  display: flex;
  flex-direction: column;
  flex: 1;
  min-width: 0;
  border-left: 1px solid #808074;
  background: #fff;
}

.sheet {
  display: grid;
  grid-template: minmax(0, 1fr) 16px / minmax(0, 1fr) 17px;
  flex: 1;
  min-height: 0;
  margin-right: 7px;
  border: 1px solid #000;
  background: #fff;
  box-shadow: 2px 2px 0 #fff, 3px 3px 0 #000, 5px 5px 0 #fff, 7px 7px 0 #000;
}

.sheet > .vscroll {
  width: 17px;
}

.sheet > .vscroll .thumb {
  margin-top: 17px;
}

.corner {
  background: #ece9d8;
}

.canvas {
  position: relative;
  overflow: hidden;
  font: 11px/13px Lato, "Liberation Sans", sans-serif;
  white-space: nowrap;
}

.verb,
.entity,
.links,
.tip {
  position: absolute;
}

.links {
  top: 0;
  left: 0;
  fill: none;
  stroke: #000;
  pointer-events: none;
}

.links path {
  shape-rendering: crispEdges;
}

.links circle {
  fill: #000;
  stroke: none;
}

.links .diamond {
  fill: #fff;
  shape-rendering: auto;
}

.shade {
  position: relative;
}

/* dithered drop shadow */
.shade::before {
  content: "";
  position: absolute;
  inset: 4px -3px -3px 4px;
  border-radius: 8px;
  background: repeating-conic-gradient(#000 0 25%, #fff 0 50%) 0 0 / 2px 2px;
}

.box {
  position: relative;
  border: 1px solid #000;
  border-radius: 8px;
  background: #fff;
}

.strong .box,
.strong .shade::before {
  border-radius: 0;
}

.keys {
  padding: 4px 5px 2px;
  border-bottom: 1px solid #000;
}

.attrs {
  min-height: 19px;
  padding: 4px 5px 1px;
}

.tip {
  top: 389px;
  left: 373px;
  padding: 1px 2px;
  border: 1px solid #000;
  background: #ffffe1;
  box-shadow: 2px 2px 2px #888;
  font: 11px/14px "Liberation Sans", Arial, sans-serif;
}

.doc-tabs {
  position: relative;
  z-index: 1;
  flex: none;
  height: 26px;
  padding-left: 12px;
  margin-top: -1px;
}

.doc-tab {
  position: relative;
  width: 74px;
  height: 27px;
}

.doc-tab svg {
  position: absolute;
  inset: 0;
  fill: #fff;
  stroke: #000;
}

.doc-tab span {
  position: relative;
}

/* bottom dock */
.dock {
  display: flex;
  flex: none;
  height: 114px;
  border-top: 2px solid #1c1c14;
}

.pane {
  display: flex;
  min-width: 0;
  padding: 4px 2px 2px 4px;
}

.pane.log {
  flex: 1;
  border-right: 1px solid #000;
  padding-right: 10px;
}

.pane.advice {
  flex: 1;
  padding-left: 2px;
}

.pane-grip {
  display: flex;
  flex-direction: column;
  flex: none;
  width: 14px;
  padding-top: 2px;
}

.pane-grip i {
  flex: 1;
  width: 7px;
  margin: 3px 2px;
  border: 1px solid #aca899;
  border-top: 0;
  border-bottom: 0;
  box-shadow: 1px 0 0 #fff, inset 1px 0 0 #fff;
}

.pane-body {
  display: flex;
  flex-direction: column;
  flex: 1;
  min-width: 0;
}

.pane-tools {
  height: 24px;
}

.log .frame {
  margin-top: 7px;
}

.advice .pane-tools {
  height: 28px;
}

.messages {
  flex: 1;
  border: 1px solid #000;
  background: #fff;
}

.messages li {
  display: flex;
  align-items: center;
  gap: 3px;
}

/* taskbar */
.taskbar {
  flex: none;
  height: 24px;
  overflow: hidden;
  border-top: 4px solid #f4f3ee;
  background: linear-gradient(#3a86e8, #2a68d8 7px, #2663da);
  color: #fff;
}

.task-inner {
  display: flex;
  align-items: center;
  gap: 2px;
  height: 30px;
  margin-top: 6px;
}

.start {
  gap: 6px;
  width: 95px;
  height: 30px;
  border-radius: 0 8px 8px 0;
  background: linear-gradient(#5fb35f, #3a943a 6px, #2f8a30);
  font: italic bold 17px/24px "Open Sans", sans-serif;
}

.quick {
  display: flex;
  flex: none;
  gap: 8px;
  width: 121px;
  padding-left: 22px;
}

.task {
  flex: 1 1 0;
  gap: 5px;
  min-width: 0;
  height: 28px;
  padding: 0 8px;
  justify-content: flex-start;
  border-radius: 3px;
  background: linear-gradient(#5b9bf8, #3c80f0 4px, #3a7aec);
}

.task.on {
  background: #1b4fb6;
}

.task span {
  overflow: hidden;
  white-space: nowrap;
}

.lang {
  padding: 0 10px 0 18px;
}

.tray {
  display: flex;
  align-items: center;
  gap: 2px;
  height: 30px;
  padding-right: 12px;
  background: linear-gradient(#38b4f6, #1290e8 6px);
}

.tray .icon:first-child {
  margin-left: -10px;
}

.tray time {
  padding-left: 10px;
}
</style>
